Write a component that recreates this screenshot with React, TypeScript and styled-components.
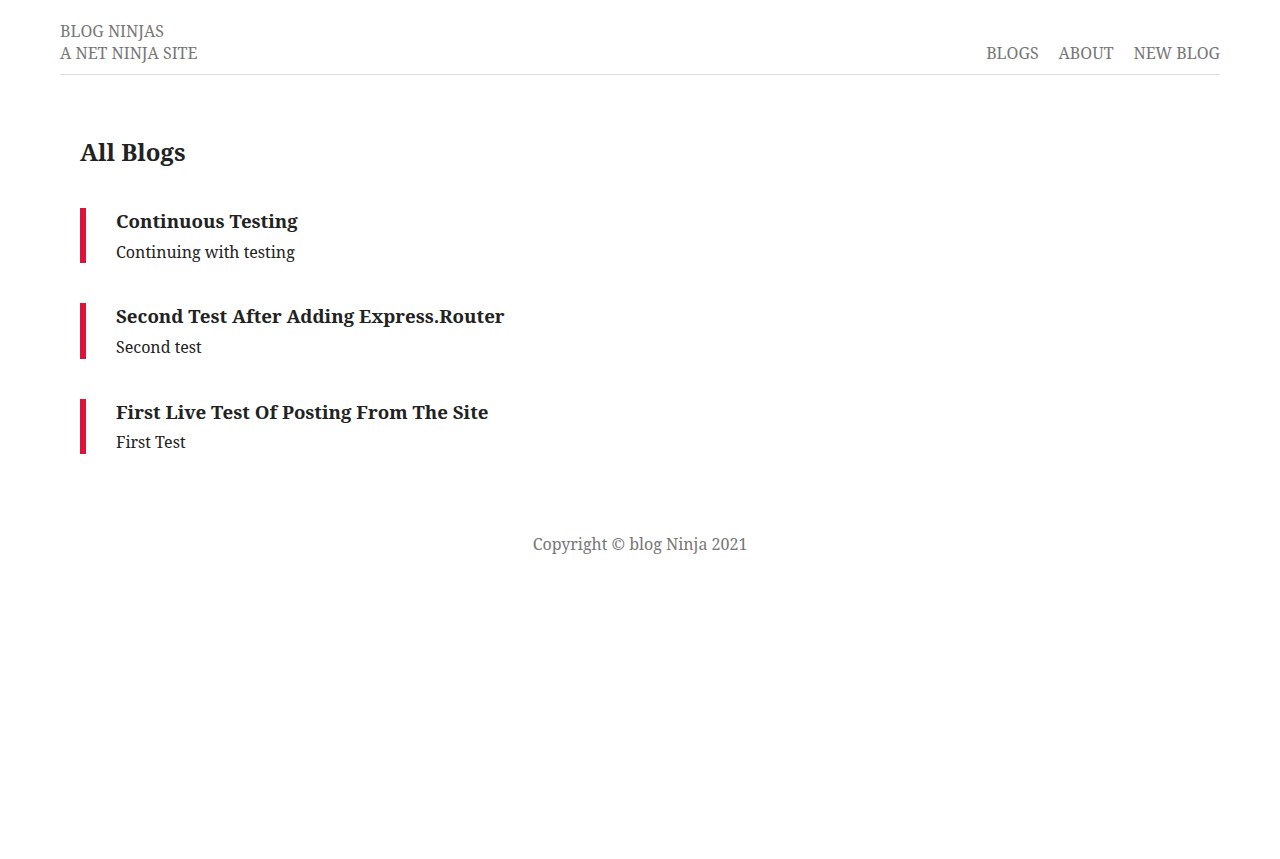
import styled, { createGlobalStyle } from 'styled-components';

const GlobalStyle = createGlobalStyle`
  html, body {
    background: #fff;
  }
  body {
    max-width: 1160px;
    margin: 21px auto 20px;
    padding: 0 20px;
    font-family: 'Noto Serif', 'DejaVu Serif', 'Liberation Serif', serif;
    font-size: 16px;
    line-height: 1.36;
    color: #222;
  }
`;

const Nav = styled.nav`
  display: flex;
  justify-content: space-between;
  margin-bottom: 61px;
  padding-bottom: 9px;
  border-bottom: 1px solid #ddd;
  text-transform: uppercase;
`;

const SiteTitle = styled.div`
  color: #777;
`;

const TitleLine = styled.p`
  margin: 0;
  font-size: 1em;
`;

const NavList = styled.ul`
  display: flex;
  align-items: flex-end;
  margin: 0;
  padding: 0;
  list-style: none;
`;

const NavItem = styled.li`
  margin-left: 20px;
`;

const NavLink = styled.a`
  color: #777;
  text-decoration: none;
`;

const Content = styled.main`
  margin-left: 20px;
`;

const PageTitle = styled.h2`
  margin: 0 0 40px;
  font-size: 24px;
  color: #222;
`;

const BlogLink = styled.a`
  display: block;
  padding-left: 30px;
  border-left: 6px solid crimson;
  margin-bottom: 40px;
  text-decoration: none;
  color: #222;
`;

const BlogTitle = styled.h3`
  margin: 0 0 8px;
  font-size: 18.72px;
  text-transform: capitalize;
`;

const Snippet = styled.p`
  margin: 0;
`;

const Footer = styled.footer`
  color: #777;
  text-align: center;
  margin: 80px auto 20px;
`;

const blogs = [
  { title: 'Continuous Testing', snippet: 'Continuing with testing' },
  { title: 'Second Test After Adding Express.Router', snippet: 'Second test' },
  { title: 'First Live Test Of Posting From The Site', snippet: 'First Test' },
];

export default function App() {
  return (
    <>
      <GlobalStyle />
      <Nav>
        <SiteTitle>
          <TitleLine>Blog Ninjas</TitleLine>
          <TitleLine>A Net Ninja Site</TitleLine>
        </SiteTitle>
        <NavList>
          <NavItem><NavLink href="#">Blogs</NavLink></NavItem>
          <NavItem><NavLink href="#">About</NavLink></NavItem>
          <NavItem><NavLink href="#">New Blog</NavLink></NavItem>
        </NavList>
      </Nav>
      <Content>
        <PageTitle>All Blogs</PageTitle>
        {blogs.map((b) => (
          <BlogLink href="#" key={b.title}>
            <BlogTitle>{b.title}</BlogTitle>
            <Snippet>{b.snippet}</Snippet>
          </BlogLink>
        ))}
      </Content>
      <Footer>Copyright &copy; blog Ninja 2021</Footer>
    </>
  );
}
